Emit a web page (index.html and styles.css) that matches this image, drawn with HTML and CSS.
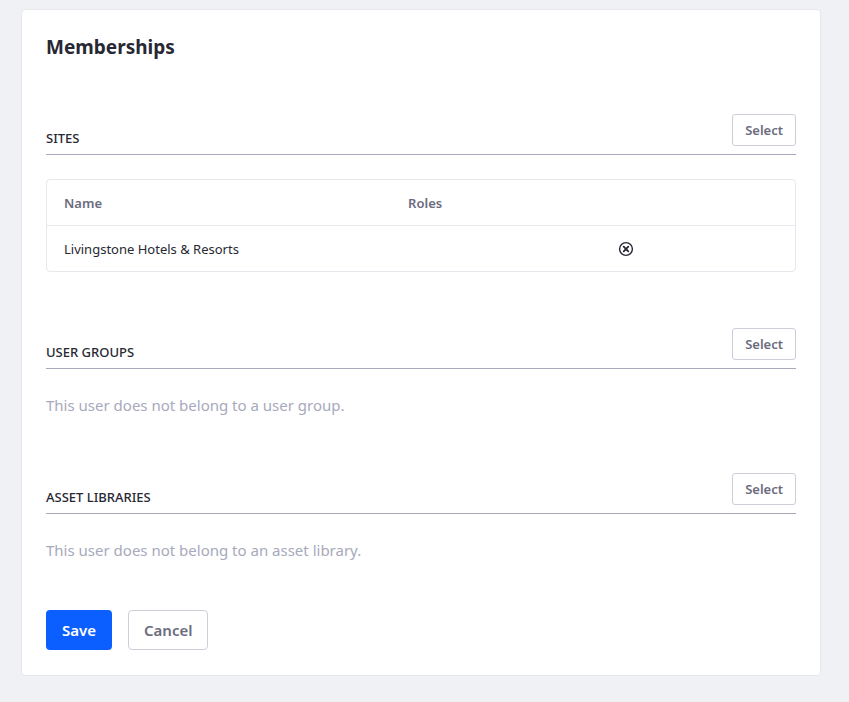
FILE: index.html
```html
<!DOCTYPE html>
<html lang="en">
<head>
  <meta charset="utf-8">
  <meta name="viewport" content="width=device-width, initial-scale=1">
  <title>Memberships</title>
  <link rel="stylesheet" href="styles.css">
</head>
<body>
  <form class="sheet">
    <h2 class="sheet-title">Memberships</h2>

    <section class="section" aria-labelledby="sites">
      <header class="section-header">
        <h3 class="section-title" id="sites">Sites</h3>
        <button class="btn btn-secondary btn-sm" type="button">Select</button>
      </header>
      <div class="table-frame">
        <table class="table">
          <thead>
            <tr>
              <th class="col-name" scope="col">Name</th>
              <th class="col-roles" scope="col">Roles</th>
              <td class="col-action"></td>
            </tr>
          </thead>
          <tbody>
            <tr>
              <td>Livingstone Hotels &amp; Resorts</td>
              <td></td>
              <td>
                <button class="btn-remove" type="button" aria-label="Remove">
                  <svg class="icon" viewBox="0 0 16 16" aria-hidden="true">
                    <circle cx="8" cy="8" r="6.4"/>
                    <path class="cross" d="M5.7 5.7l4.6 4.6M10.3 5.7l-4.6 4.6"/>
                  </svg>
                </button>
              </td>
            </tr>
          </tbody>
        </table>
      </div>
    </section>

    <section class="section" aria-labelledby="user-groups">
      <header class="section-header">
        <h3 class="section-title" id="user-groups">User Groups</h3>
        <button class="btn btn-secondary btn-sm" type="button">Select</button>
      </header>
      <p class="empty">This user does not belong to a user group.</p>
    </section>

    <section class="section" aria-labelledby="asset-libraries">
      <header class="section-header">
        <h3 class="section-title" id="asset-libraries">Asset Libraries</h3>
        <button class="btn btn-secondary btn-sm" type="button">Select</button>
      </header>
      <p class="empty">This user does not belong to an asset library.</p>
    </section>

    <footer class="sheet-footer">
      <button class="btn btn-primary" type="submit">Save</button>
      <button class="btn btn-secondary" type="button">Cancel</button>
    </footer>
  </form>
</body>
</html>
```
FILE: styles.css
```css
* {
  box-sizing: border-box;
}

body {
  margin: 0;
  padding: 9px 28px 26px 21px;
  background: #f0f1f5;
  color: #272833;
  font-family: "Segoe UI", "Noto Sans", "Open Sans", sans-serif;
  font-size: 15px;
  line-height: 24px;
}

.sheet {
  padding: 24px 24px 25px;
  background: #fff;
  border: 1px solid #e7e7ed;
  border-radius: 4px;
}

.sheet-title {
  margin: 0 0 54px;
  font-size: 19px;
  font-weight: 700;
  line-height: 26px;
}

.section {
  margin-bottom: 56px;
}

.section-header {
  display: flex;
  align-items: flex-end;
  justify-content: space-between;
  margin-bottom: 24px;
  padding-bottom: 8px;
  border-bottom: 1px solid #a7a9bc;
}

.section-title {
  margin: 0;
  font-size: 13px;
  font-weight: 500;
  line-height: 16px;
  text-transform: uppercase;
}

.table-frame {
  border: 1px solid #e7e7ed;
  border-radius: 4px;
}

.table {
  width: 100%;
  border-collapse: separate;
  border-spacing: 0;
  table-layout: fixed;
  font-size: 13px;
}

.table th,
.table td {
  height: 45px;
  padding: 0 17px;
  text-align: left;
}

.table th {
  color: #6b6c7e;
  font-weight: 600;
}

.table thead th,
.table thead td {
  height: 46px;
  border-bottom: 1px solid #e7e7ed;
}

.col-name {
  width: 46%;
}

.col-roles {
  width: 28%;
}

.btn-remove {
  display: block;
  padding: 0;
  background: none;
  border: 0;
  cursor: pointer;
}

.icon {
  display: block;
  width: 16px;
  height: 16px;
  fill: none;
  stroke: #272833;
  stroke-width: 1.4;
  stroke-linecap: round;
}

.cross {
  stroke-width: 1.8;
}

.empty {
  margin: 0;
  color: #a7a9bc;
}

.sheet-footer {
  display: flex;
  gap: 16px;
  margin-top: -8px;
}

.btn {
  height: 40px;
  padding: 0 15px;
  border: 1px solid transparent;
  border-radius: 4px;
  font-family: inherit;
  font-size: 15px;
  font-weight: 600;
  line-height: 24px;
  cursor: pointer;
}

.btn-primary {
  background: #0b5fff;
  color: #fff;
}

.btn-secondary {
  background: #fff;
  border-color: #cdced9;
  color: #6b6c7e;
}

.btn-sm {
  height: 32px;
  padding: 0 12px;
  border-radius: 3px;
  font-size: 13px;
}
```
